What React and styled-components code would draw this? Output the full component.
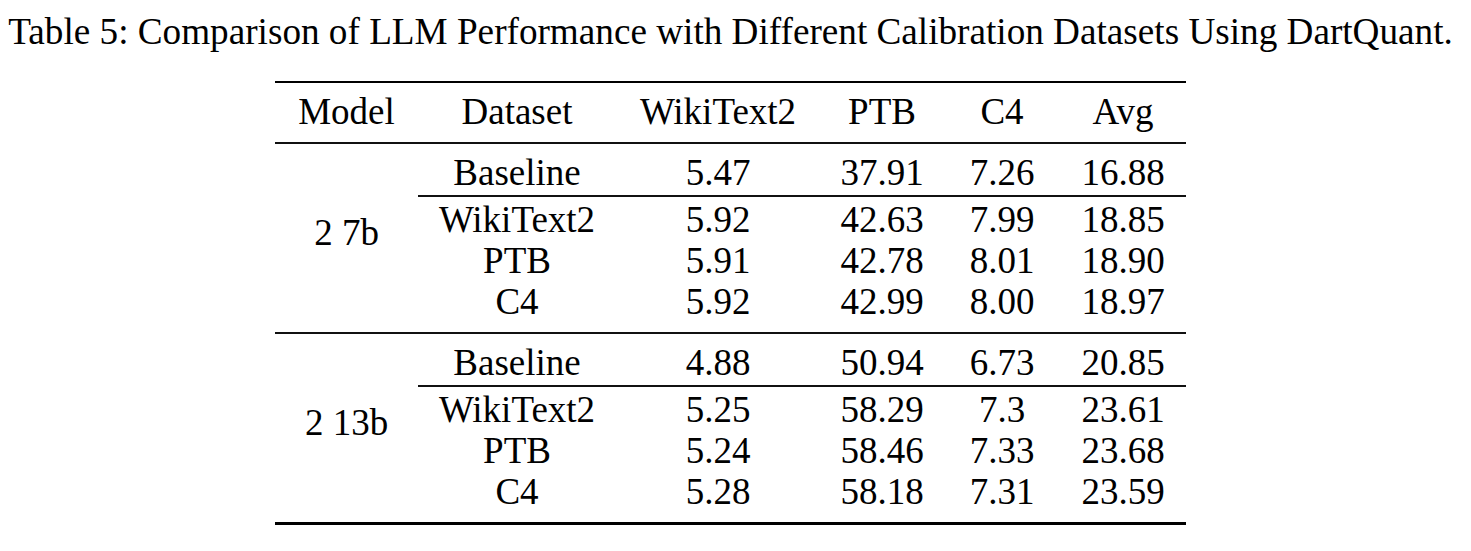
import React from 'react';
import styled, { createGlobalStyle } from 'styled-components';

const GlobalStyle = createGlobalStyle`
  html, body {
    margin: 0;
    padding: 0;
    background: #ffffff;
  }
  body {
    font-family: "Liberation Serif", "Times New Roman", serif;
    color: #000000;
  }
`;

const Page = styled.div`
  width: 1461px;
  display: flex;
  flex-direction: column;
  align-items: center;
  padding-top: 11px;
`;

const Caption = styled.div`
  font-size: 37.2px;
  line-height: 41px;
  white-space: nowrap;
  margin-bottom: 29px;
`;

const Table = styled.table`
  border-collapse: collapse;
  table-layout: fixed;
  font-size: 37px;
  line-height: 41px;
  border-top: 2px solid #000;
  border-bottom: 3px solid #000;
`;

const HeadCell = styled.th`
  font-weight: normal;
  text-align: center;
  padding: 8px 0 10px;
  border-bottom: 2px solid #111;
  white-space: nowrap;
`;

const ModelCell = styled.td`
  text-align: center;
  vertical-align: middle;
  padding: 0 0 11px;
  white-space: nowrap;
`;

const Cell = styled.td`
  text-align: center;
  padding: ${(p) => (p.$top ? '8px' : p.$afterRule ? '2px' : '0')} 0
    ${(p) => (p.$last ? '10px' : p.$beforeRule ? '2px' : '0')};
  border-bottom: ${(p) => (p.$beforeRule ? '2px solid #111' : 'none')};
  white-space: nowrap;
`;

const Group = styled.tbody`
  border-top: ${(p) => (p.$ruled ? '2px solid #111' : 'none')};
`;

const widths = [143, 198, 204, 124, 116, 126];
const headers = ['Model', 'Dataset', 'WikiText2', 'PTB', 'C4', 'Avg'];

const groups = [
  {
    model: '2 7b',
    rows: [
      ['Baseline', '5.47', '37.91', '7.26', '16.88'],
      ['WikiText2', '5.92', '42.63', '7.99', '18.85'],
      ['PTB', '5.91', '42.78', '8.01', '18.90'],
      ['C4', '5.92', '42.99', '8.00', '18.97'],
    ],
  },
  {
    model: '2 13b',
    rows: [
      ['Baseline', '4.88', '50.94', '6.73', '20.85'],
      ['WikiText2', '5.25', '58.29', '7.3', '23.61'],
      ['PTB', '5.24', '58.46', '7.33', '23.68'],
      ['C4', '5.28', '58.18', '7.31', '23.59'],
    ],
  },
];

export default function App() {
  return (
    <>
      <GlobalStyle />
      <Page>
        <Caption>
          Table 5: Comparison of LLM Performance with Different Calibration Datasets Using DartQuant.
        </Caption>
        <Table>
          <colgroup>
            {widths.map((w, i) => (
              <col key={i} style={{ width: w }} />
            ))}
          </colgroup>
          <thead>
            <tr>
              {headers.map((h) => (
                <HeadCell key={h}>{h}</HeadCell>
              ))}
            </tr>
          </thead>
          {groups.map((g, gi) => (
            <Group key={g.model} $ruled={gi > 0}>
              {g.rows.map((r, ri) => (
                <tr key={ri}>
                  {ri === 0 && <ModelCell rowSpan={4}>{g.model}</ModelCell>}
                  {r.map((v, ci) => (
                    <Cell
                      key={ci}
                      $top={ri === 0}
                      $beforeRule={ri === 0}
                      $afterRule={ri === 1}
                      $last={ri === 3}
                    >
                      {v}
                    </Cell>
                  ))}
                </tr>
              ))}
            </Group>
          ))}
        </Table>
      </Page>
    </>
  );
}
